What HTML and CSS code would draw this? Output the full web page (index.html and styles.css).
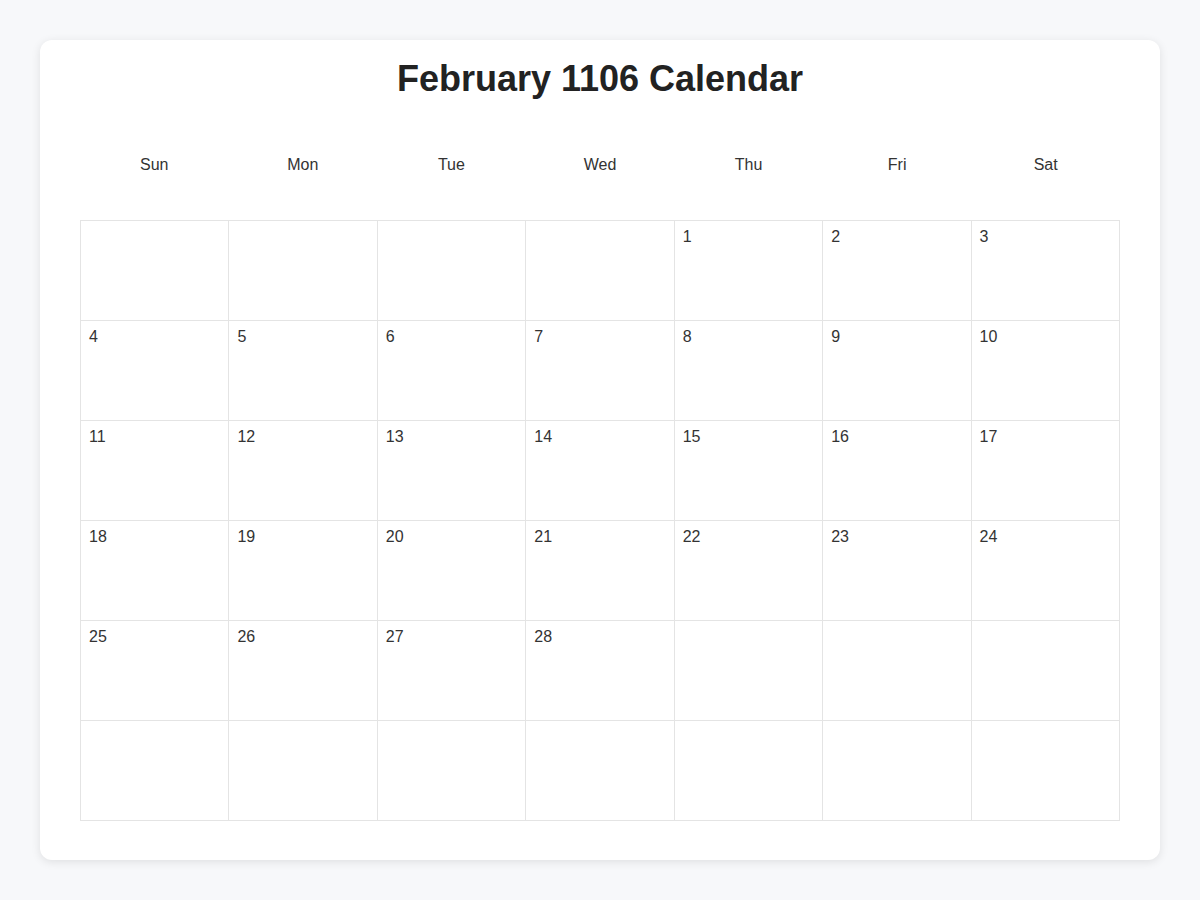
FILE: index.html
```html
<!DOCTYPE html>
<html lang="en">
<head>
<meta charset="utf-8">
<title>February 1106 Calendar</title>
<link rel="stylesheet" href="styles.css">
</head>
<body>
<div class="card">
  <h1 class="title">February 1106 Calendar</h1>
  <div class="weekdays">
    <div>Sun</div><div>Mon</div><div>Tue</div><div>Wed</div><div>Thu</div><div>Fri</div><div>Sat</div>
  </div>
  <div class="grid">
    <div class="cell"></div><div class="cell"></div><div class="cell"></div><div class="cell"></div>
    <div class="cell">1</div><div class="cell">2</div><div class="cell">3</div>
    <div class="cell">4</div><div class="cell">5</div><div class="cell">6</div><div class="cell">7</div>
    <div class="cell">8</div><div class="cell">9</div><div class="cell">10</div>
    <div class="cell">11</div><div class="cell">12</div><div class="cell">13</div><div class="cell">14</div>
    <div class="cell">15</div><div class="cell">16</div><div class="cell">17</div>
    <div class="cell">18</div><div class="cell">19</div><div class="cell">20</div><div class="cell">21</div>
    <div class="cell">22</div><div class="cell">23</div><div class="cell">24</div>
    <div class="cell">25</div><div class="cell">26</div><div class="cell">27</div><div class="cell">28</div>
    <div class="cell"></div><div class="cell"></div><div class="cell"></div>
    <div class="cell"></div><div class="cell"></div><div class="cell"></div><div class="cell"></div>
    <div class="cell"></div><div class="cell"></div><div class="cell"></div>
  </div>
</div>
</body>
</html>
```
FILE: styles.css
```css
html, body {
  margin: 0;
  padding: 0;
}
body {
  background: #f7f8fa;
  font-family: "Liberation Sans", Arial, sans-serif;
  color: #333;
  padding: 40px;
}
.card {
  background: #fff;
  border-radius: 12px;
  box-shadow: 0 2px 10px rgba(0, 0, 0, 0.1);
  padding: 18px 40px 40px;
  height: 820px;
  box-sizing: border-box;
}
.title {
  margin: 0;
  font-size: 36px;
  line-height: 41px;
  font-weight: bold;
  text-align: center;
  color: #222;
}
.weekdays {
  display: grid;
  grid-template-columns: repeat(7, 1fr);
  margin-top: 43px;
  height: 46px;
  align-items: center;
  text-align: center;
  font-size: 16px;
  color: #333;
}
.grid {
  margin-top: 32px;
  display: grid;
  grid-template-columns: repeat(7, 1fr);
  grid-auto-rows: 100px;
  border-top: 1px solid #e4e4e4;
  border-left: 1px solid #e4e4e4;
}
.cell {
  border-right: 1px solid #e4e4e4;
  border-bottom: 1px solid #e4e4e4;
  padding: 7px 8px;
  font-size: 16px;
  line-height: 18px;
  color: #333;
}
```
